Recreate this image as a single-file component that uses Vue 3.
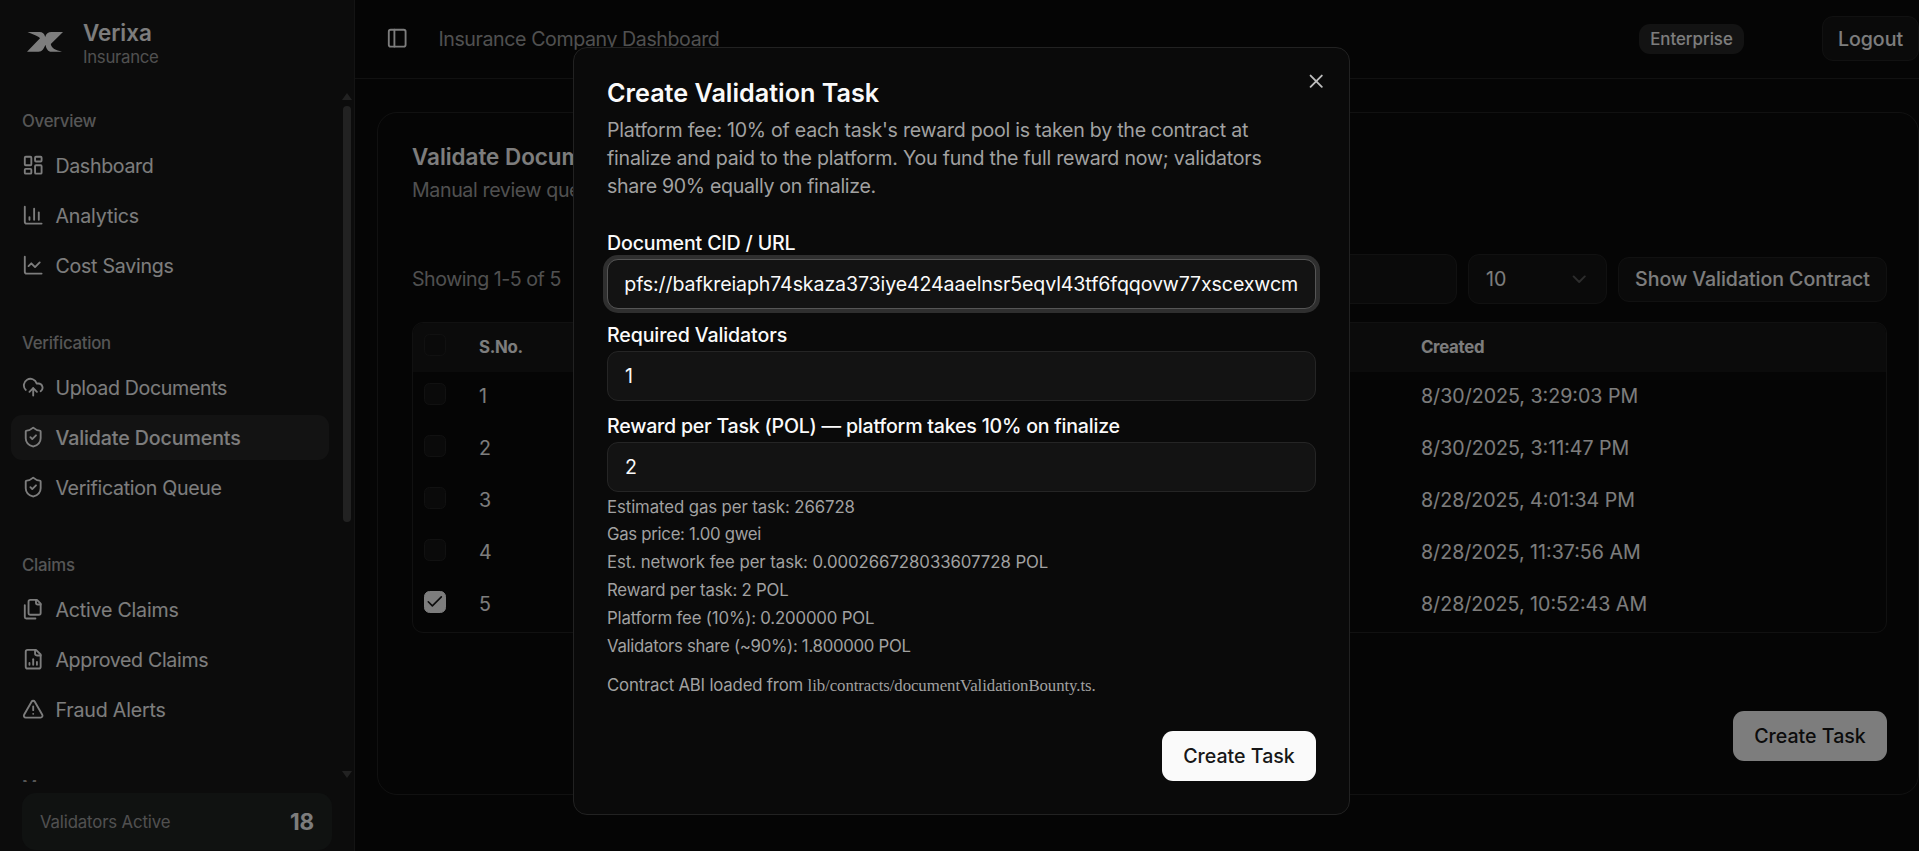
<script setup>
// ls: letter-spacing in pixels
const groups = [
  { title: 'Overview', items: [
    { icon: 'dashboard', text: 'Dashboard', ls: -0.33 },
    { icon: 'chart', text: 'Analytics', ls: -0.15 },
    { icon: 'line', text: 'Cost Savings', ls: -0.25 },
  ] },
  { title: 'Verification', items: [
    { icon: 'upload', text: 'Upload Documents', ls: -0.34 },
    { icon: 'shield', text: 'Validate Documents', ls: -0.1, active: true },
    { icon: 'shield', text: 'Verification Queue', ls: -0.3 },
  ] },
  { title: 'Claims', items: [
    { icon: 'files', text: 'Active Claims', ls: -0.2 },
    { icon: 'filechart', text: 'Approved Claims', ls: -0.33 },
    { icon: 'alert', text: 'Fraud Alerts', ls: -0.17 },
  ] },
  { title: 'More', items: [] },
]
const icons = {
  dashboard: ['M4 3h5a1 1 0 0 1 1 1v7a1 1 0 0 1-1 1H4a1 1 0 0 1-1-1V4a1 1 0 0 1 1-1z', 'M15 3h5a1 1 0 0 1 1 1v3a1 1 0 0 1-1 1h-5a1 1 0 0 1-1-1V4a1 1 0 0 1 1-1z', 'M15 12h5a1 1 0 0 1 1 1v7a1 1 0 0 1-1 1h-5a1 1 0 0 1-1-1v-7a1 1 0 0 1 1-1z', 'M4 16h5a1 1 0 0 1 1 1v3a1 1 0 0 1-1 1H4a1 1 0 0 1-1-1v-3a1 1 0 0 1 1-1z'],
  chart: ['M3 3v16a2 2 0 0 0 2 2h16', 'M18 17V9', 'M13 17V5', 'M8 17v-3'],
  line: ['M3 3v16a2 2 0 0 0 2 2h16', 'm19 9-5 5-4-4-3 3'],
  upload: ['M12 13v8', 'M4 14.899A7 7 0 1 1 15.71 8h1.79a4.5 4.5 0 0 1 2.5 8.242', 'm8 17 4-4 4 4'],
  shield: ['M20 13c0 5-3.5 7.5-7.66 8.95a1 1 0 0 1-.67-.01C7.5 20.5 4 18 4 13V6a1 1 0 0 1 1-1c2 0 4.5-1.2 6.24-2.72a1.17 1.17 0 0 1 1.52 0C14.51 3.81 17 5 19 5a1 1 0 0 1 1 1z', 'm9 12 2 2 4-4'],
  files: ['M20 7h-3a2 2 0 0 1-2-2V2', 'M9 18a2 2 0 0 1-2-2V4a2 2 0 0 1 2-2h7l4 4v10a2 2 0 0 1-2 2Z', 'M3 7.6v12.8A1.6 1.6 0 0 0 4.6 22h9.8'],
  filechart: ['M15 2H6a2 2 0 0 0-2 2v16a2 2 0 0 0 2 2h12a2 2 0 0 0 2-2V7Z', 'M14 2v4a2 2 0 0 0 2 2h4', 'M8 18v-2', 'M12 18v-6', 'M16 18v-3'],
  alert: ['m21.73 18-8-14a2 2 0 0 0-3.48 0l-8 14A2 2 0 0 0 4 21h16a2 2 0 0 0 1.73-3', 'M12 9v4', 'M12 17h.01'],
}
const rows = [
  { n: 1, date: '8/30/2025, 3:29:03 PM' },
  { n: 2, date: '8/30/2025, 3:11:47 PM' },
  { n: 3, date: '8/28/2025, 4:01:34 PM' },
  { n: 4, date: '8/28/2025, 11:37:56 AM' },
  { n: 5, date: '8/28/2025, 10:52:43 AM', on: true },
]
const facts = [
  { text: 'Estimated gas per task: 266728', ls: -0.1 },
  { text: 'Gas price: 1.00 gwei', ls: -0.3 },
  { text: 'Est. network fee per task: 0.000266728033607728 POL', ls: -0.06 },
  { text: 'Reward per task: 2 POL', ls: -0.2 },
  { text: 'Platform fee (10%): 0.200000 POL', ls: -0.17 },
  { text: 'Validators share (~90%): 1.800000 POL', ls: -0.3 },
]
</script>

<template>
  <div class="screen">
    <aside class="sidebar">
      <div class="brand">
        <svg class="logo" viewBox="0 0 36 20"><path d="M0.5 0H12.500c3 0 5 1.800 5.700 5C19.200 1.800 21 0 24.500 0H36L23.800 12C24.300 16.500 29 18 35 19.700H24.500c-3.500 0-5.200-2.700-6-7C16.500 16.500 15.500 19.700 11.500 19.700H0L13 6.300C11 3.500 5 2.300 0.500 0Z" fill="currentColor" /></svg>
        <div>
          <div class="brand-name">Verixa</div>
          <div class="brand-sub">Insurance</div>
        </div>
      </div>
      <div class="scroll">
        <nav class="nav">
          <section v-for="g in groups" :key="g.title" class="group">
            <h4>{{ g.title }}</h4>
            <a v-for="it in g.items" :key="it.text" class="item" :class="{ active: it.active }">
              <svg class="ico" viewBox="0 0 24 24"><path v-for="d in icons[it.icon]" :key="d" :d="d" /></svg>
              <span :style="{ letterSpacing: it.ls + 'px' }">{{ it.text }}</span>
            </a>
          </section>
        </nav>
        <div class="bar">
          <i class="up"></i>
          <i class="thumb"></i>
          <i class="down"></i>
        </div>
      </div>
      <div class="stat"><span>Validators Active</span><b>18</b></div>
    </aside>

    <main class="main">
      <header class="top">
        <svg class="ico" viewBox="0 0 24 24"><rect x="3" y="3" width="18" height="18" rx="2" /><path d="M9 3v18" /></svg>
        <span class="crumb">Insurance Company Dashboard</span>
        <span class="badge">Enterprise</span>
        <button class="btn logout">Logout</button>
      </header>

      <div class="card">
        <h2>Validate Documents</h2>
        <p class="sub">Manual review queue</p>
        <div class="tools">
          <span class="showing">Showing 1-5 of 5</span>
          <div class="box search"></div>
          <div class="box select"><span>10</span><svg class="ico chev" viewBox="0 0 24 24"><path d="m6 9 6 6 6-6" /></svg></div>
          <button class="btn show">Show Validation Contract</button>
        </div>
        <div class="table">
          <div class="tr th"><i class="check"></i><span class="no">S.No.</span><span class="date">Created</span></div>
          <div v-for="r in rows" :key="r.n" class="tr">
            <i class="check" :class="{ on: r.on }"><svg v-if="r.on" class="tick" viewBox="0 0 24 24"><path d="M20 6 9 17l-5-5" /></svg></i>
            <span class="no">{{ r.n }}</span><span class="date">{{ r.date }}</span>
          </div>
        </div>
        <button class="primary">Create Task</button>
      </div>
    </main>

    <div class="dim"></div>

    <div class="dialog">
      <svg class="ico close" viewBox="0 0 24 24"><path d="M18 6 6 18" /><path d="m6 6 12 12" /></svg>
      <h3>Create Validation Task</h3>
      <p class="desc"><span class="d1">Platform fee: 10% of each task's reward pool is taken by the contract at</span><br><span class="d2">finalize and paid to the platform. You fund the full reward now; validators</span><br><span class="d3">share 90% equally on finalize.</span></p>
      <div class="field">
        <label class="l1">Document CID / URL</label>
        <div class="input focus"><div class="clip"><span class="url">ipfs://bafkreiaph74skaza373iye424aaelnsr5eqvl43tf6fqqovw77xscexwcm</span></div></div>
      </div>
      <div class="field">
        <label class="l2">Required Validators</label>
        <div class="input">1</div>
      </div>
      <div class="field">
        <label class="l3">Reward per Task (POL) — platform takes 10% on finalize</label>
        <div class="input">2</div>
      </div>
      <div class="facts"><div v-for="f in facts" :key="f.text" :style="{ letterSpacing: f.ls + 'px' }">{{ f.text }}</div></div>
      <p class="abi"><span>Contract ABI loaded from </span><code>lib/contracts/documentValidationBounty.ts.</code></p>
      <button class="primary">Create Task</button>
    </div>
  </div>
</template>

<style>
html, body { margin: 0; overflow: hidden; background: #050505; }
</style>

<style scoped>
.screen { position: relative; display: flex; width: 1919px; height: 851px; overflow: hidden; background: #0a0a0a; color: #fafafa; font-family: Inter, "Liberation Sans", sans-serif; font-size: 19.6px; line-height: 28px; white-space: nowrap; }
.screen * { box-sizing: border-box; }
h2, h3, h4, p { margin: 0; }
button { font: inherit; color: inherit; border: 0; padding: 0; }
.ico { width: 22.4px; height: 22.4px; flex: none; fill: none; stroke: currentColor; stroke-width: 2; stroke-linecap: round; stroke-linejoin: round; }

.sidebar { display: flex; flex-direction: column; width: 355px; height: 851px; flex: none; background: #181818; border-right: 1px solid #282828; }
.brand { display: flex; align-items: flex-start; height: 90px; padding: 19px 0 0 27px; }
.logo { width: 36px; height: 20px; margin: 13px 20px 0 0; flex: none; }
.brand-name { font-size: 22.4px; font-weight: 600; line-height: 28px; }
.brand-sub { font-size: 16.8px; line-height: 20px; letter-spacing: -.3px; color: #a1a1a1; }
.scroll { display: flex; height: 692px; overflow: hidden; }
.nav { width: 341px; padding: 8px 12px 0 11px; overflow: hidden; }
.group { display: flex; flex-direction: column; gap: 5px; margin-bottom: 32px; }
.group h4 { height: 45px; margin-bottom: -5px; padding-left: 11px; font-size: 16.8px; line-height: 47px; font-weight: 500; letter-spacing: -.25px; color: #acacac; }
.item { display: flex; align-items: center; gap: 11px; height: 45px; padding-left: 11px; border-radius: 11px; }
.item.active { background: #262626; font-weight: 500; }
.bar { display: flex; flex-direction: column; align-items: center; width: 12px; padding: 3px 0 4px; }
.bar i { display: block; }
.up { border: 5px solid transparent; border-top: 0; border-bottom: 7px solid #444; }
.thumb { width: 8px; height: 416px; margin: 6px 0 auto; border-radius: 4px; background: #444; }
.down { border: 5px solid transparent; border-bottom: 0; border-top: 7px solid #444; }
.stat { display: flex; align-items: center; justify-content: space-between; height: 57px; margin: 11px 22px 0 22px; padding: 0 18px; border-radius: 14px; background: #202423; font-size: 16.8px; letter-spacing: -.15px; color: #a1a1a1; }
.stat b { font-size: 22.4px; font-weight: 700; color: #fafafa; }

.main { flex: 1; min-width: 0; }
.top { display: flex; align-items: center; height: 79px; padding: 0 0 1px 31px; border-bottom: 1px solid #222; }
.crumb { margin-left: 30px; letter-spacing: -.41px; color: #a1a1a1; }
.badge { width: 105px; height: 30px; margin-left: auto; border-radius: 11px; background: #262626; font-size: 16.8px; line-height: 30px; font-weight: 500; text-align: center; }
.btn { height: 45px; border: 1px solid #222; border-radius: 11px; background: #141414; font-weight: 500; letter-spacing: -.06px; }
.logout { width: 97px; margin-left: 78px; }
.card { display: flex; flex-direction: column; width: 1542px; height: 683px; margin: 33px 0 0 22px; padding: 0 31px 0 34px; border: 1px solid #222; border-radius: 20px; }
h2 { margin-top: 30px; font-size: 22.4px; line-height: 28px; font-weight: 600; }
.sub { margin-top: 5px; letter-spacing: -.38px; color: #a1a1a1; }
.tools { display: flex; align-items: center; height: 50px; margin-top: 50px; }
.showing { letter-spacing: -.46px; color: #a1a1a1; }
.box { height: 50px; border: 1px solid #222; border-radius: 11px; background: #141414; }
.search { width: 400px; margin-left: auto; }
.select { display: flex; align-items: center; justify-content: space-between; width: 139px; margin: 0 11px; padding: 0 16px 0 17px; }
.chev { opacity: .3; }
.show { width: 269px; }
.table { margin-top: 18px; border: 1px solid #222; border-radius: 11px; overflow: hidden; flex: none; }
.tr { display: flex; align-items: center; height: 52px; padding: 0 0 4px 11px; }
.th { height: 49px; padding-bottom: 2px; background: #161616; font-size: 16.8px; font-weight: 700; letter-spacing: -.3px; }
.check { display: flex; align-items: center; justify-content: center; width: 22px; height: 22px; margin-top: -4px; border: 1px solid #222; border-radius: 5.6px; background: #141414; }
.check.on { background: #fafafa; border-color: #fafafa; }
.tick { width: 19.6px; height: 19.6px; flex: none; fill: none; stroke: #171717; stroke-width: 2; stroke-linecap: round; stroke-linejoin: round; }
.no { width: 942px; margin-left: 33px; flex: none; }
.primary { width: 154px; height: 50px; flex: none; border-radius: 11px; background: #fafafa; color: #171717; font-weight: 500; }
.card .primary { margin: 78px 0 0 auto; }

.dim { position: absolute; inset: 0; background: rgba(0, 0, 0, .5); }

.dialog { position: absolute; left: 573px; top: 47px; display: flex; flex-direction: column; width: 777px; height: 768px; padding: 33px 33px 0; border: 1px solid #222; border-radius: 14px; background: #0a0a0a; }
.close { position: absolute; right: 22px; top: 22px; opacity: .75; }
h3 { font-size: 25.2px; line-height: 25px; font-weight: 600; }
.desc { margin: 10px 0 29px; color: #a1a1a1; }
.d1 { letter-spacing: -.26px; }
.d2 { letter-spacing: -.22px; }
.d3 { letter-spacing: -.33px; }
.field { margin-bottom: 11.5px; }
label { display: block; height: 28px; margin-bottom: 2px; font-weight: 500; }
.l1 { letter-spacing: -.17px; }
.l2 { letter-spacing: -.12px; }
.l3 { letter-spacing: -.23px; }
.input { height: 50px; padding: 0 17px; border: 1px solid #252525; border-radius: 11px; background: #131313; line-height: 48px; }
.input.focus { border-color: #555; box-shadow: 0 0 0 4px #2f2f2f; }
.clip { display: flex; justify-content: flex-end; overflow: hidden; }
.url { letter-spacing: -.12px; }
.facts { margin-top: -10px; font-size: 16.8px; line-height: 27.95px; color: #a1a1a1; }
.abi { margin-top: 9.5px; font-size: 16.8px; color: #a1a1a1; }
.abi span { white-space: pre; letter-spacing: -.2px; }
.abi code { font-family: "Liberation Serif", serif; font-size: 16.8px; letter-spacing: -.06px; }
.dialog .primary { margin: 31px 0 0 auto; }
</style>
